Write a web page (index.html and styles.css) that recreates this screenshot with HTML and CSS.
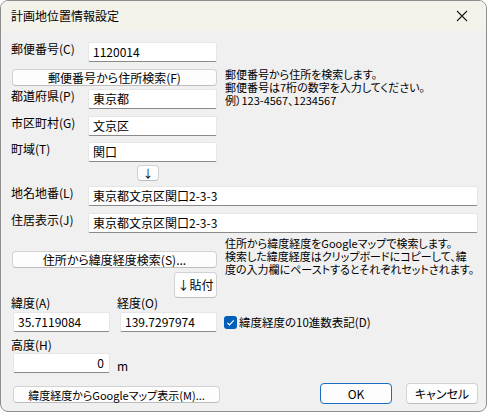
FILE: index.html
```html
<!DOCTYPE html>
<html lang="ja">
<head>
<meta charset="utf-8">
<link rel="stylesheet" href="styles.css">
</head>
<body>
<div class="window">
  <div class="titlebar">
    <div class="title">計画地位置情報設定</div>
    <div class="close">
      <svg width="12" height="12" viewBox="0 0 12 12"><path d="M1 1 L11 11 M11 1 L1 11" stroke="#1a1a1a" stroke-width="1.1" fill="none"/></svg>
    </div>
  </div>
  <div class="content">
    <div class="top">
      <div class="label r1">郵便番号(C)</div>
      <div class="field r1 c2">1120014</div>
      <div class="btn r2 wide">郵便番号から住所検索(F)</div>
      <div class="desc d1">郵便番号から住所を検索します。<br>郵便番号は7桁の数字を入力してください。<br>例）123-4567、1234567</div>
      <div class="label r3">都道府県(P)</div>
      <div class="field r3 c2">東京都</div>
      <div class="label r4">市区町村(G)</div>
      <div class="field r4 c2">文京区</div>
      <div class="label r5">町域(T)</div>
      <div class="field r5 c2">関口</div>
      <div class="btn arrow r6">↓</div>
      <div class="label r7">地名地番(L)</div>
      <div class="field r7 long">東京都文京区関口2-3-3</div>
      <div class="label r8">住居表示(J)</div>
      <div class="field r8 long">東京都文京区関口2-3-3</div>
      <div class="btn r9 wide">住所から緯度経度検索(S)...</div>
      <div class="desc d2">住所から緯度経度をGoogleマップで検索します。<br>検索した緯度経度はクリップボードにコピーして、緯<br>度の入力欄にペーストするとそれぞれセットされます。</div>
      <div class="btn paste r10">↓貼付</div>
    </div>
    <div class="coords">
      <div class="clabel lat-l">緯度(A)</div>
      <div class="clabel lon-l">経度(O)</div>
      <div class="field lat">35.7119084</div>
      <div class="field lon">139.7297974</div>
      <div class="check">
        <svg width="13" height="13" viewBox="0 0 13 13"><rect x="0" y="0" width="13" height="13" rx="3" fill="#005fb8"/><path d="M3.3 6.8 L5.5 9 L9.8 4.4" stroke="#fff" stroke-width="1.2" fill="none"/></svg>
        <span>緯度経度の10進数表記(D)</span>
      </div>
      <div class="clabel alt-l">高度(H)</div>
      <div class="field alt">0</div>
      <div class="unit">m</div>
    </div>
    <div class="footer">
      <div class="btn gmap">緯度経度からGoogleマップ表示(M)...</div>
      <div class="spacer"></div>
      <div class="btn dlg ok">OK</div>
      <div class="btn dlg">キャンセル</div>
    </div>
  </div>
</div>
</body>
</html>
```
FILE: styles.css
```css
html, body {
  margin: 0;
  padding: 0;
  background: #ffffff;
}
body {
  font-family: "Noto Sans CJK JP", "Noto Sans", sans-serif;
  font-size: 12px;
  font-feature-settings: "palt" 1;
  color: #000;
}
.window {
  width: 487px;
  height: 412px;
  box-sizing: border-box;
  border: 1px solid #8e8e8e;
  border-radius: 8px;
  overflow: hidden;
  background: #f0f0f0;
  display: flex;
  flex-direction: column;
}
.titlebar {
  height: 30px;
  flex: none;
  background: #f3f2eb;
  display: flex;
  align-items: center;
  justify-content: space-between;
  padding-left: 10px;
}
.title {
  font-size: 12px;
  line-height: 16px;
}
.close {
  width: 48px;
  height: 30px;
  display: flex;
  align-items: center;
  justify-content: center;
}
.content {
  padding: 11px 8px 0 10px;
}
.top {
  display: grid;
  grid-template-columns: 77px 129px 8px 1fr;
  grid-template-rows: 20px 24px 23px 27px 26px 19px 25px 27px 35px 30px;
}
.r1 { grid-row: 1; }
.r2 { grid-row: 2; }
.r3 { grid-row: 3; }
.r4 { grid-row: 4; }
.r5 { grid-row: 5; }
.r6 { grid-row: 6; }
.r7 { grid-row: 7; }
.r8 { grid-row: 8; }
.r9 { grid-row: 9; }
.r10 { grid-row: 10; }
.label {
  grid-column: 1;
  align-self: end;
  line-height: 16px;
  margin-bottom: 5px;
  white-space: nowrap;
}
.field {
  box-sizing: border-box;
  height: 20px;
  background: #fff;
  border: 1px solid #e6e6e6;
  border-bottom: 1px solid #8a8a8a;
  border-radius: 2px;
  padding-left: 4px;
  line-height: 18px;
  white-space: nowrap;
  align-self: end;
}
.c2 { grid-column: 2; }
.long { grid-column: 2 / 5; }
.btn {
  box-sizing: border-box;
  background: #fdfdfd;
  border: 1px solid #d2d2d2;
  border-bottom-color: #bdbdbd;
  border-radius: 4px;
  display: flex;
  align-items: center;
  justify-content: center;
  white-space: nowrap;
  line-height: 14px;
}
.wide {
  grid-column: 1 / 3;
  align-self: end;
  height: 17px;
  margin-left: 1px;
}
.desc {
  grid-column: 4;
  font-size: 11px;
  line-height: 13px;
  white-space: nowrap;
  align-self: start;
}
.d1 { grid-row: 2 / 4; margin-top: 6px; }
.d2 { grid-row: 9 / 11; margin-top: 4px; }
.arrow {
  grid-column: 2;
  align-self: end;
  justify-self: start;
  margin-left: 49px;
  width: 22px;
  height: 16px;
  font-size: 11px;
}
.paste {
  grid-column: 2;
  align-self: end;
  justify-self: end;
  width: 43px;
  height: 26px;
}
.coords {
  margin-top: -2px;
  display: grid;
  grid-template-columns: 106px 107px 1fr;
  grid-template-rows: 14px 22px 20px 21px;
}
.clabel {
  line-height: 14px;
  align-self: end;
  white-space: nowrap;
}
.lat-l { grid-row: 1; grid-column: 1; }
.lon-l { grid-row: 1; grid-column: 2; }
.lat { grid-row: 2; grid-column: 1; margin-left: 2px; width: 97px; }
.lon { grid-row: 2; grid-column: 2; margin-left: 3px; width: 97px; }
.check {
  grid-row: 2;
  grid-column: 3;
  align-self: end;
  height: 20px;
  display: flex;
  align-items: center;
  gap: 2px;
  white-space: nowrap;
  font-size: 11.5px;
}
.check svg { display: block; }
.alt-l { grid-row: 3; grid-column: 1; }
.alt {
  grid-row: 4;
  grid-column: 1;
  margin-left: 2px;
  width: 97px;
  text-align: right;
  padding-left: 0;
  padding-right: 5px;
}
.unit {
  grid-row: 4;
  grid-column: 2;
  align-self: end;
  line-height: 14px;
}
.footer {
  margin-top: 10px;
  display: flex;
  align-items: flex-start;
  gap: 14px;
  height: 21px;
}
.gmap {
  margin-left: 2px;
  margin-top: 3px;
  width: 207px;
  height: 17px;
  font-size: 11px;
}
.spacer { flex: 1; }
.dlg {
  width: 72px;
  height: 21px;
}
.ok {
  border: 1px solid #1a6fc4;
}
```
